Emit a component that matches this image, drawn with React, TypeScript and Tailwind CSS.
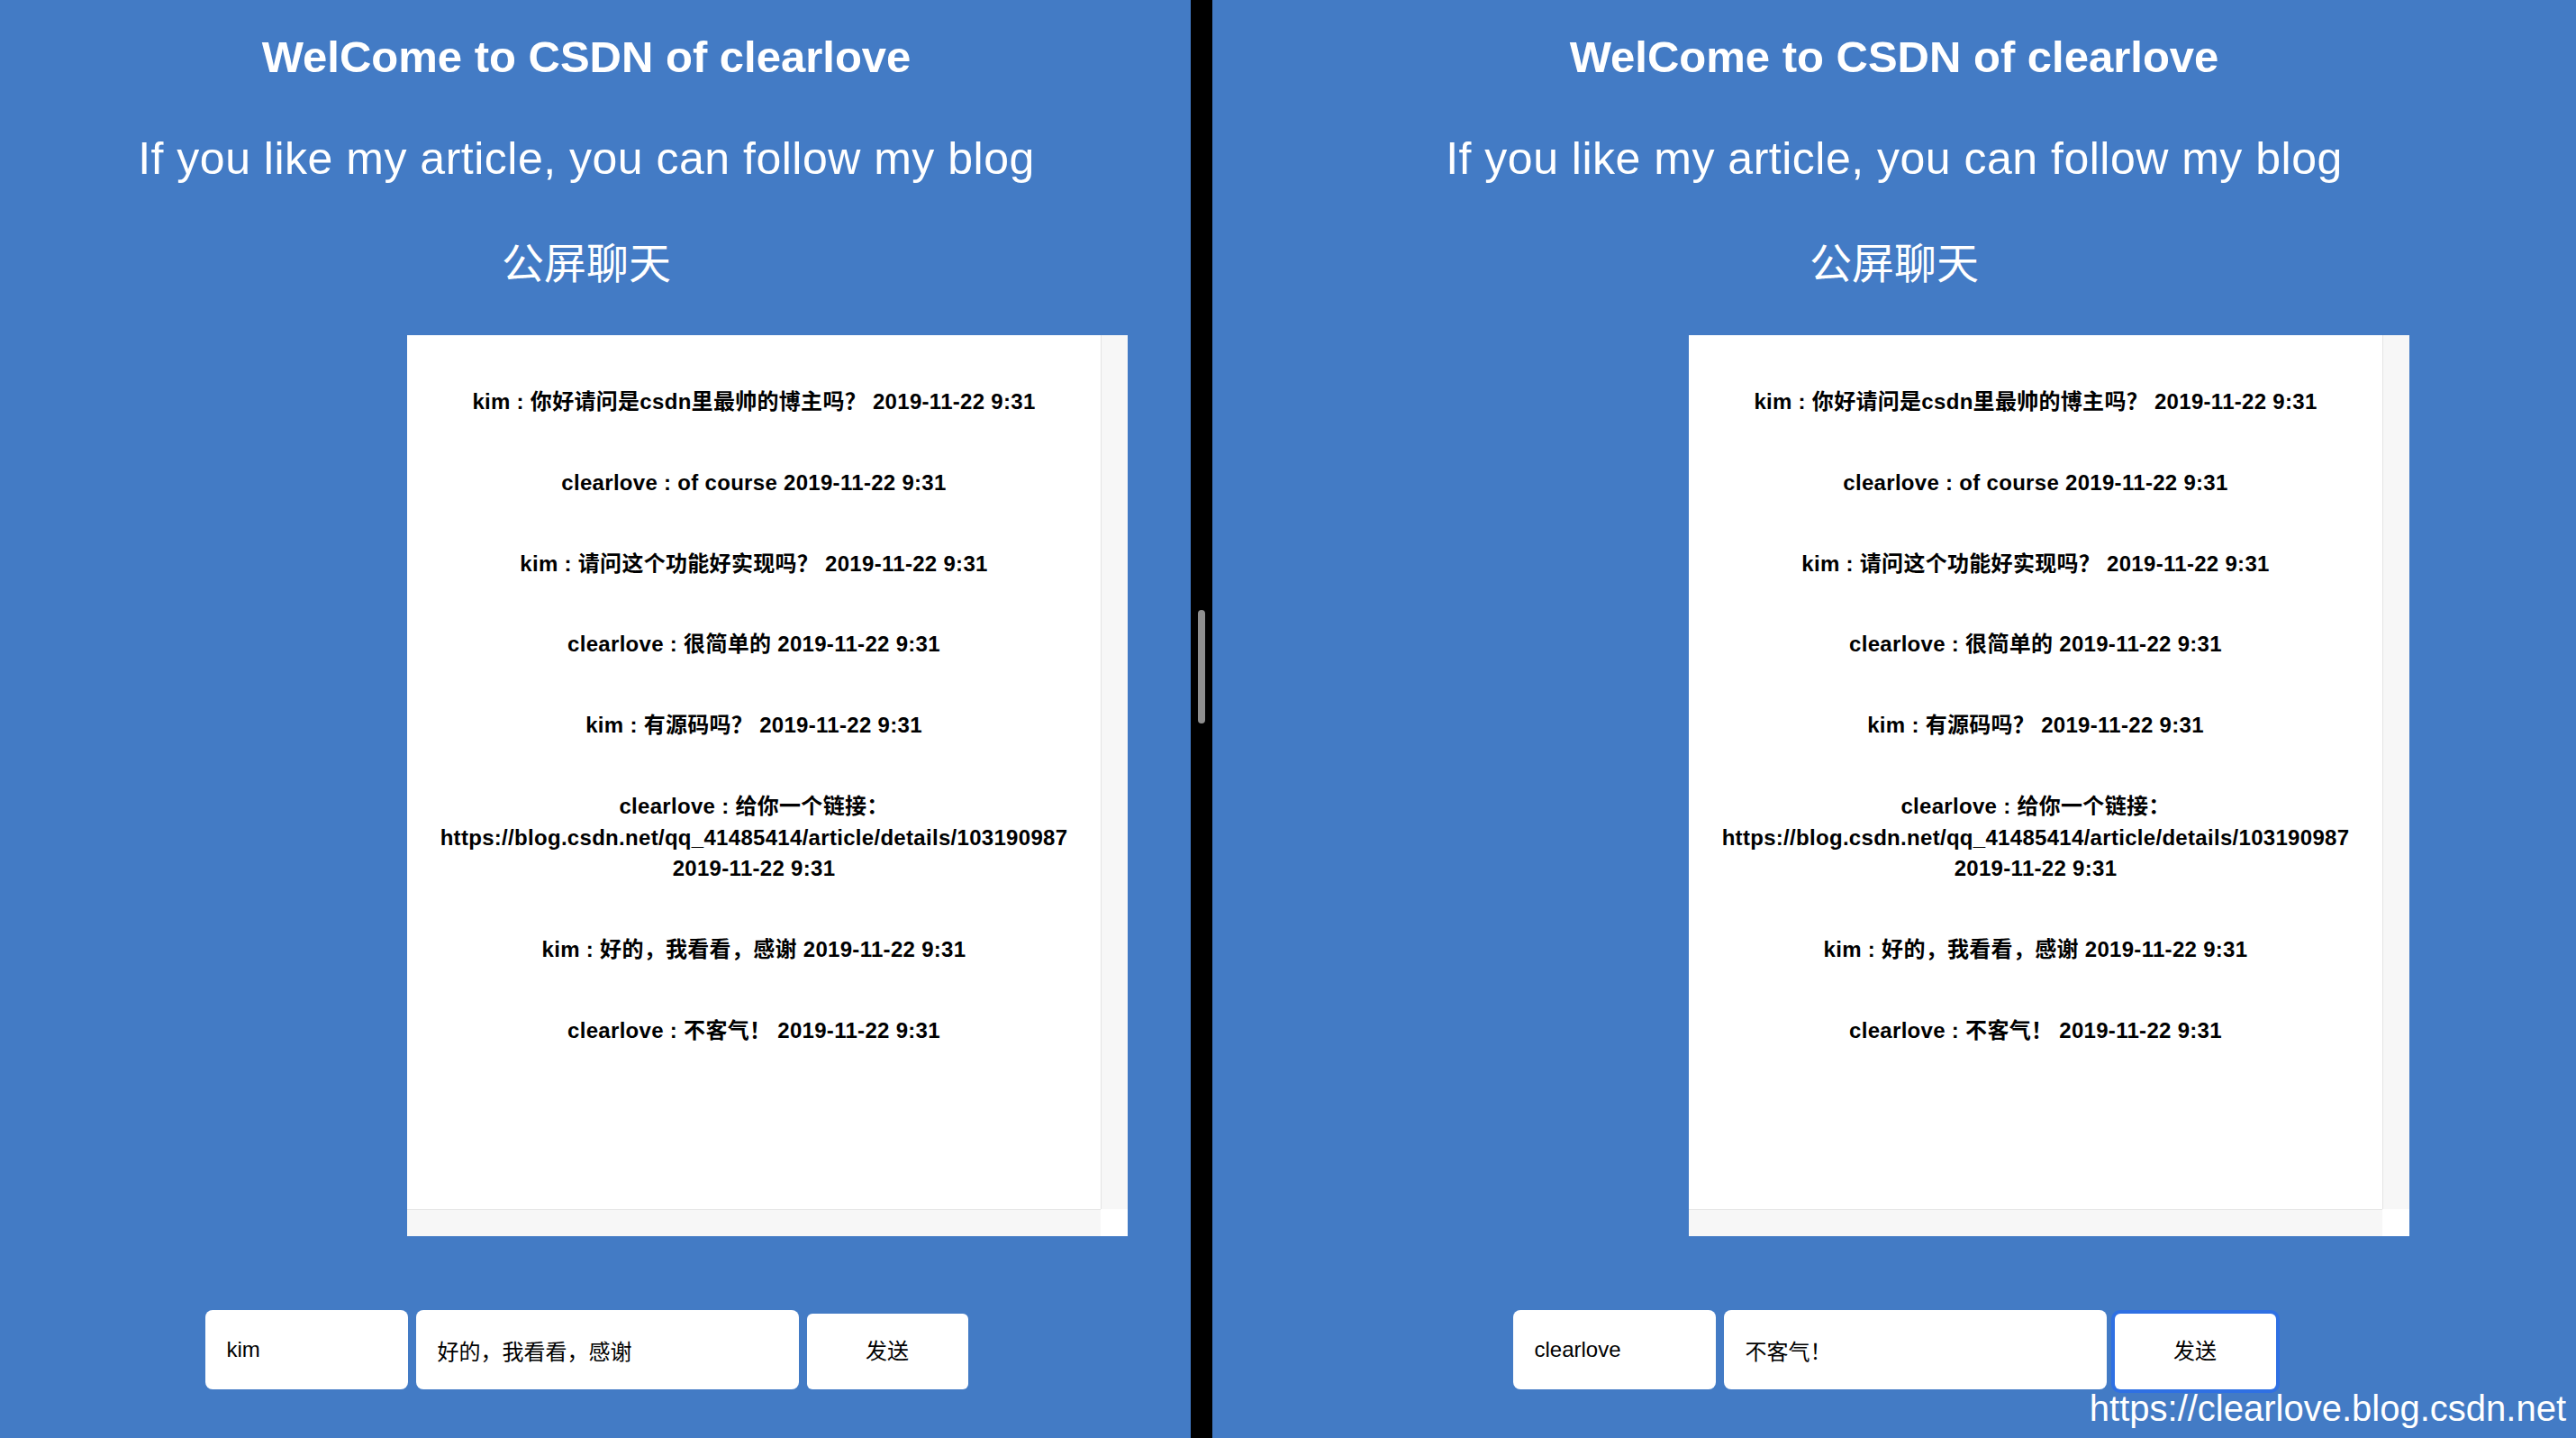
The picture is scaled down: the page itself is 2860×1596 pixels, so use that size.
const messages: string[][] = [
  ['kim : 你好请问是csdn里最帅的博主吗？ 2019-11-22 9:31'],
  ['clearlove : of course 2019-11-22 9:31'],
  ['kim : 请问这个功能好实现吗？ 2019-11-22 9:31'],
  ['clearlove : 很简单的 2019-11-22 9:31'],
  ['kim : 有源码吗？ 2019-11-22 9:31'],
  ['clearlove : 给你一个链接：', 'https://blog.csdn.net/qq_41485414/article/details/103190987', '2019-11-22 9:31'],
  ['kim : 好的，我看看，感谢 2019-11-22 9:31'],
  ['clearlove : 不客气！ 2019-11-22 9:31'],
]

type PanelProps = {
  boxClass: string
  name: string
  text: string
  focused?: boolean
}

function ChatPanel({ boxClass, name, text, focused }: PanelProps) {
  return (
    <div className="flex flex-col text-white">
      <h1 className="pt-[33px] text-center text-[49px] font-bold leading-[60px]">WelCome to CSDN of clearlove</h1>
      <p className="mt-[53px] text-center text-[50px] leading-[60px] tracking-[0.5px]">If you like my article, you can follow my blog</p>
      <p className="mt-[57px] text-center text-[47px] leading-[60px]">公屏聊天</p>

      <div className={`mt-[49px] flex h-[1000px] w-[800px] flex-col bg-white ${boxClass}`}>
        <div className="flex h-[970px]">
          <div className="flex w-[770px] flex-col gap-[55.1px] pt-[57px] text-center text-[24px] font-bold leading-[34.7px] tracking-[0.3px] text-black">
            {messages.map((lines, i) => (
              <div key={i}>
                {lines.map((line, j) => (
                  <div key={j} className="whitespace-pre">{line}</div>
                ))}
              </div>
            ))}
          </div>
          <div className="w-[30px] border-l border-[#e4e4e4] bg-[#f7f7f7]" />
        </div>
        <div className="flex h-[30px]">
          <div className="w-[770px] border-t border-[#e4e4e4] bg-[#f7f7f7]" />
          <div className="w-[30px] bg-white" />
        </div>
      </div>

      <div className="mt-[82px] flex items-end justify-center gap-[9px]">
        <input defaultValue={name} className="h-[88px] w-[225px] rounded-[8px] bg-white px-[24px] text-[24px] text-black outline-none" />
        <input defaultValue={text} className="h-[88px] w-[425px] rounded-[8px] bg-white px-[24px] text-[24px] text-black outline-none" />
        <button
          className={
            focused
              ? 'h-[84px] w-[179px] rounded-[6px] bg-white text-[24px] text-black ring-4 ring-[#2f70e3]'
              : 'h-[84px] w-[179px] rounded-[6px] bg-white text-[24px] text-black'
          }
        >
          发送
        </button>
      </div>
    </div>
  )
}

export default function App() {
  return (
    <div className="flex h-[1596px] w-[2860px] overflow-hidden bg-[#437bc5] font-['Liberation_Sans','Noto_Sans_CJK_SC',sans-serif]">
      <div className="w-[1322px] shrink-0">
        <div className="w-[1302px]">
          <ChatPanel boxClass="ml-[452px]" name="kim" text="好的，我看看，感谢" />
        </div>
      </div>

      <div className="flex w-[24px] shrink-0 justify-center bg-black pt-[677px]">
        <div className="h-[126px] w-[8px] rounded-full bg-[#8e8e8e]" />
      </div>

      <div className="relative flex-1">
        <ChatPanel boxClass="ml-[529px]" name="clearlove" text="不客气！" focused />
        <div className="absolute bottom-[13px] right-[11px] text-[40px] leading-[40px] text-white">https://clearlove.blog.csdn.net</div>
      </div>
    </div>
  )
}
